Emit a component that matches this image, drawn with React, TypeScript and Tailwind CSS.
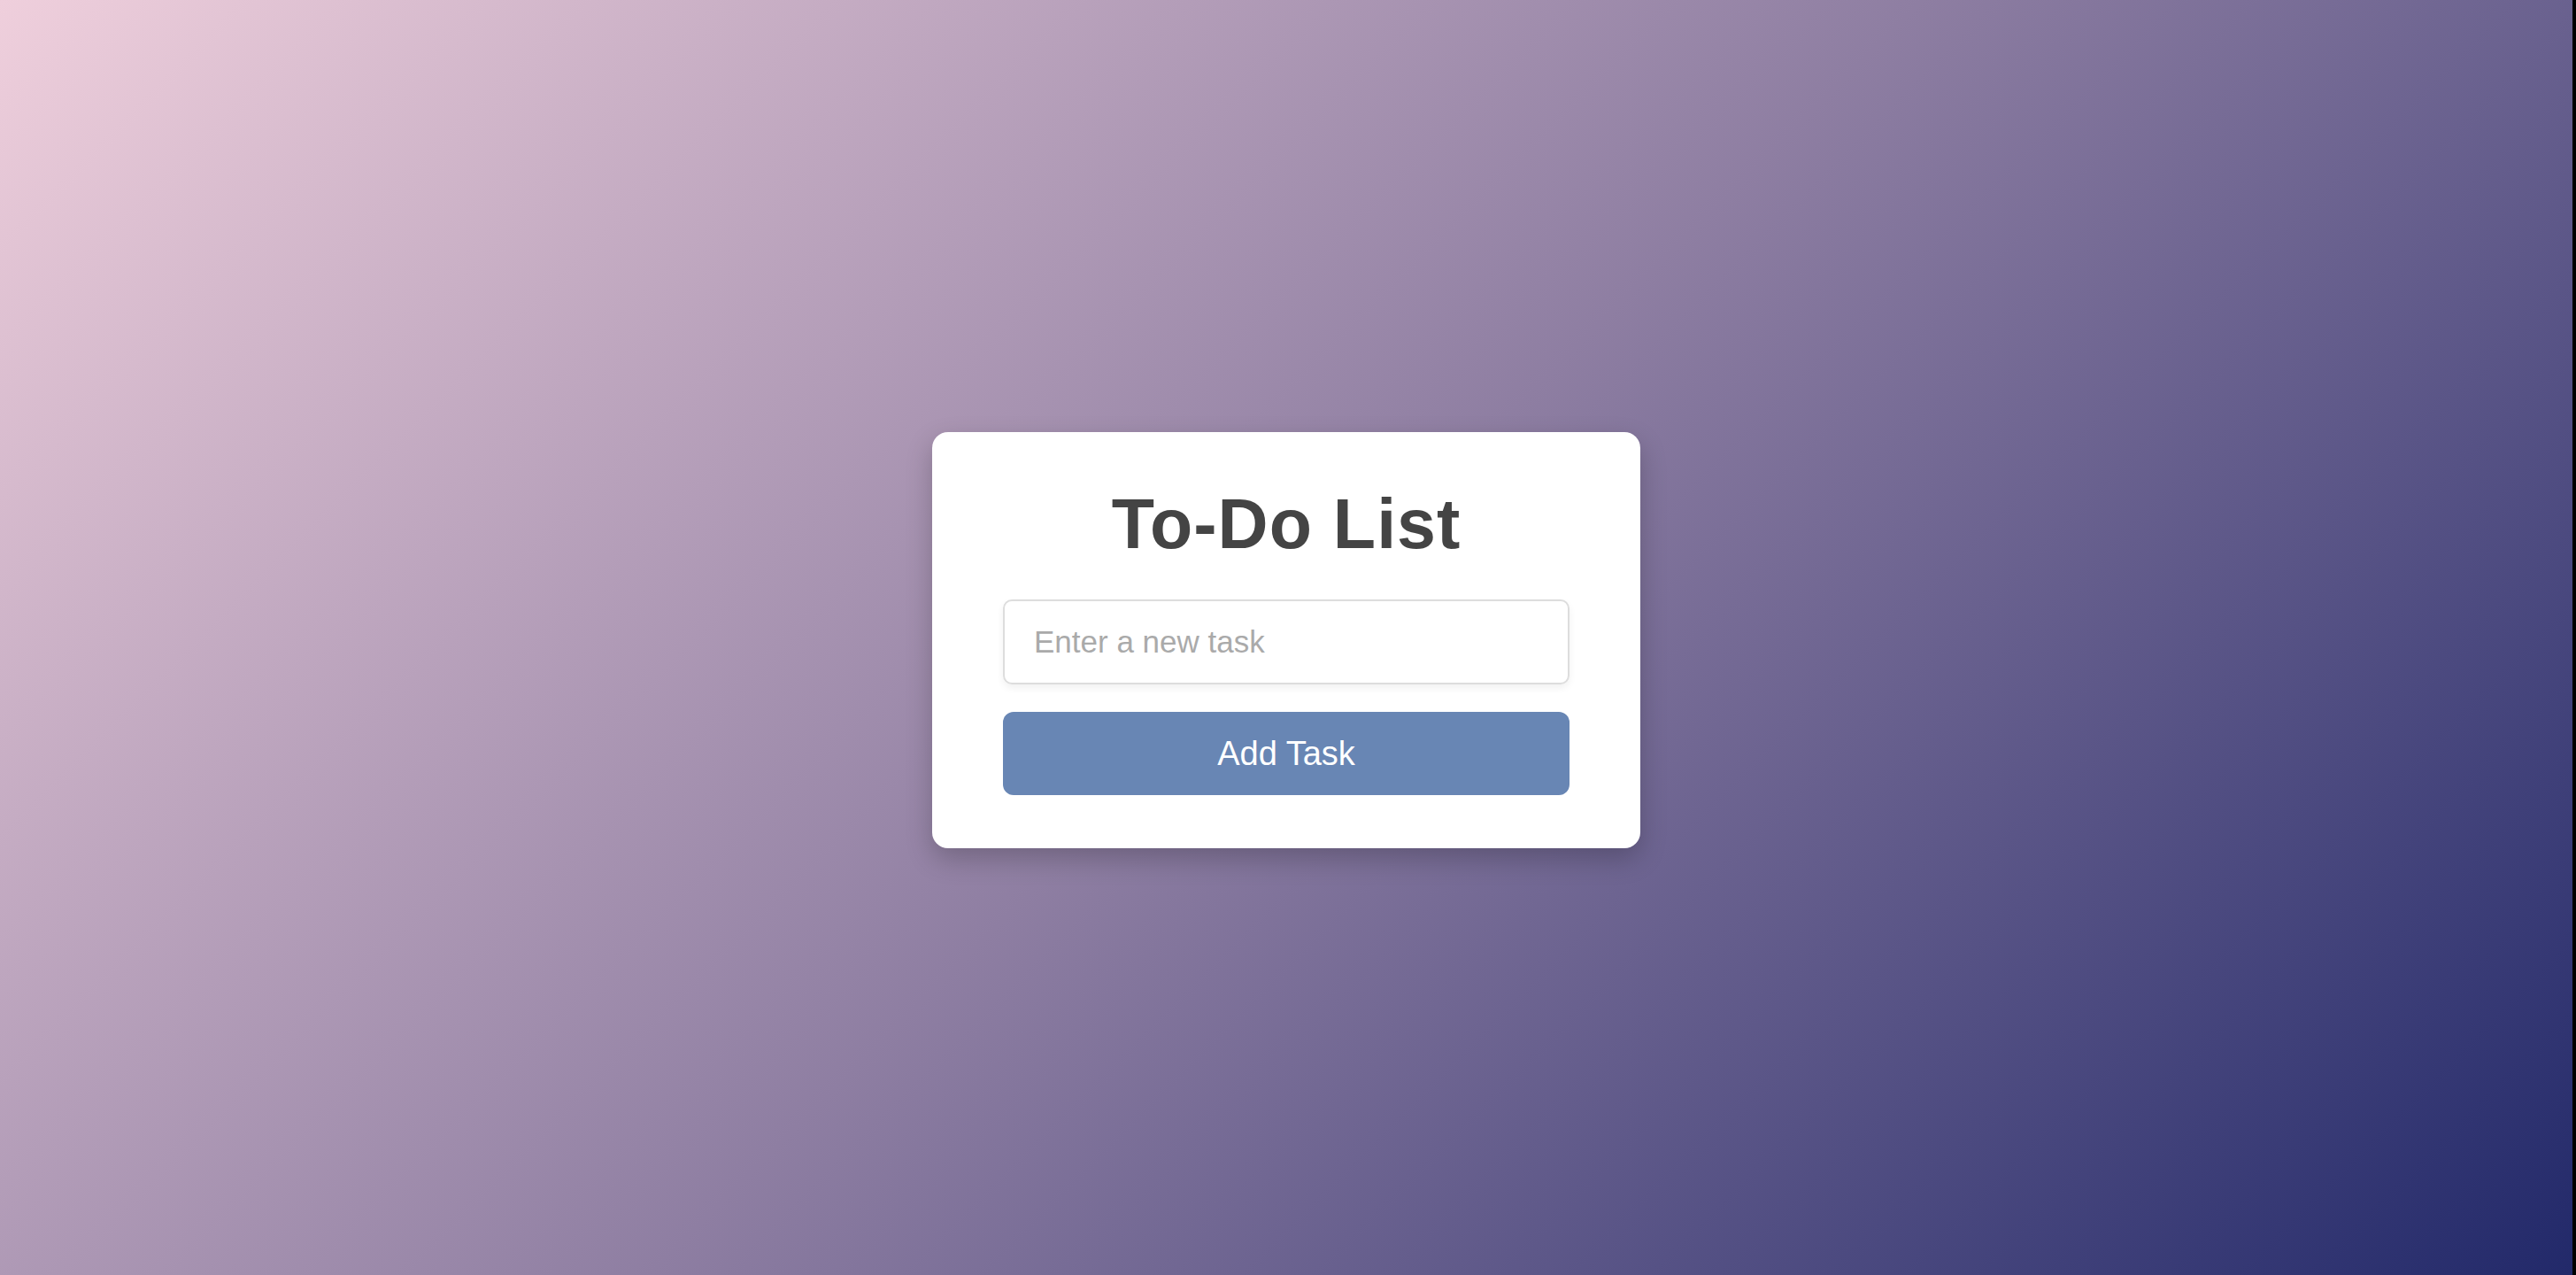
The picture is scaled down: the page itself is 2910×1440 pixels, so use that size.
import { useState } from "react";

export default function App() {
  const [task, setTask] = useState("");
  const [tasks, setTasks] = useState<string[]>([]);

  const handleAdd = () => {
    if (!task.trim()) return;
    setTasks([...tasks, task.trim()]);
    setTask("");
  };

  return (
    <div className="flex h-[1440px] w-full border-r-4 border-black">
      <div className="flex flex-1 items-center justify-center bg-[linear-gradient(135deg,#efcfdc_0%,#8e7ea2_50%,#22296a_100%)]">
        {/* Card */}
        <div className="mt-[6px] flex w-[800px] flex-col rounded-[18px] bg-white px-[80px] pt-[64px] pb-[60px] shadow-[0_12px_30px_rgba(0,0,0,0.22)]">
          <h1 className="text-center font-['Liberation_Sans',Arial,sans-serif] text-[79px] font-bold leading-none tracking-[1px] text-[#444444]">
            To-Do List
          </h1>

          <input
            type="text"
            value={task}
            onChange={(e) => setTask(e.target.value)}
            placeholder="Enter a new task"
            className="mt-[46px] h-[96px] w-full rounded-[10px] border-2 border-[#dddddd] px-[33px] font-['Liberation_Sans',Arial,sans-serif] text-[35px] text-[#333] shadow-[0_4px_8px_rgba(0,0,0,0.06)] outline-none placeholder:text-[#aaaaaa]"
          />

          <button
            onClick={handleAdd}
            className="mt-[31px] h-[94px] w-full rounded-[12px] bg-[#6886b4] font-['Liberation_Sans',Arial,sans-serif] text-[38px] text-white"
          >
            Add Task
          </button>

          {tasks.length > 0 && (
            <ul className="mt-6 flex flex-col gap-3">
              {tasks.map((t, i) => (
                <li
                  key={i}
                  className="rounded-[10px] bg-[#f4f4f4] px-6 py-4 font-['Liberation_Sans',Arial,sans-serif] text-[30px] text-[#444]"
                >
                  {t}
                </li>
              ))}
            </ul>
          )}
        </div>
      </div>
    </div>
  );
}
